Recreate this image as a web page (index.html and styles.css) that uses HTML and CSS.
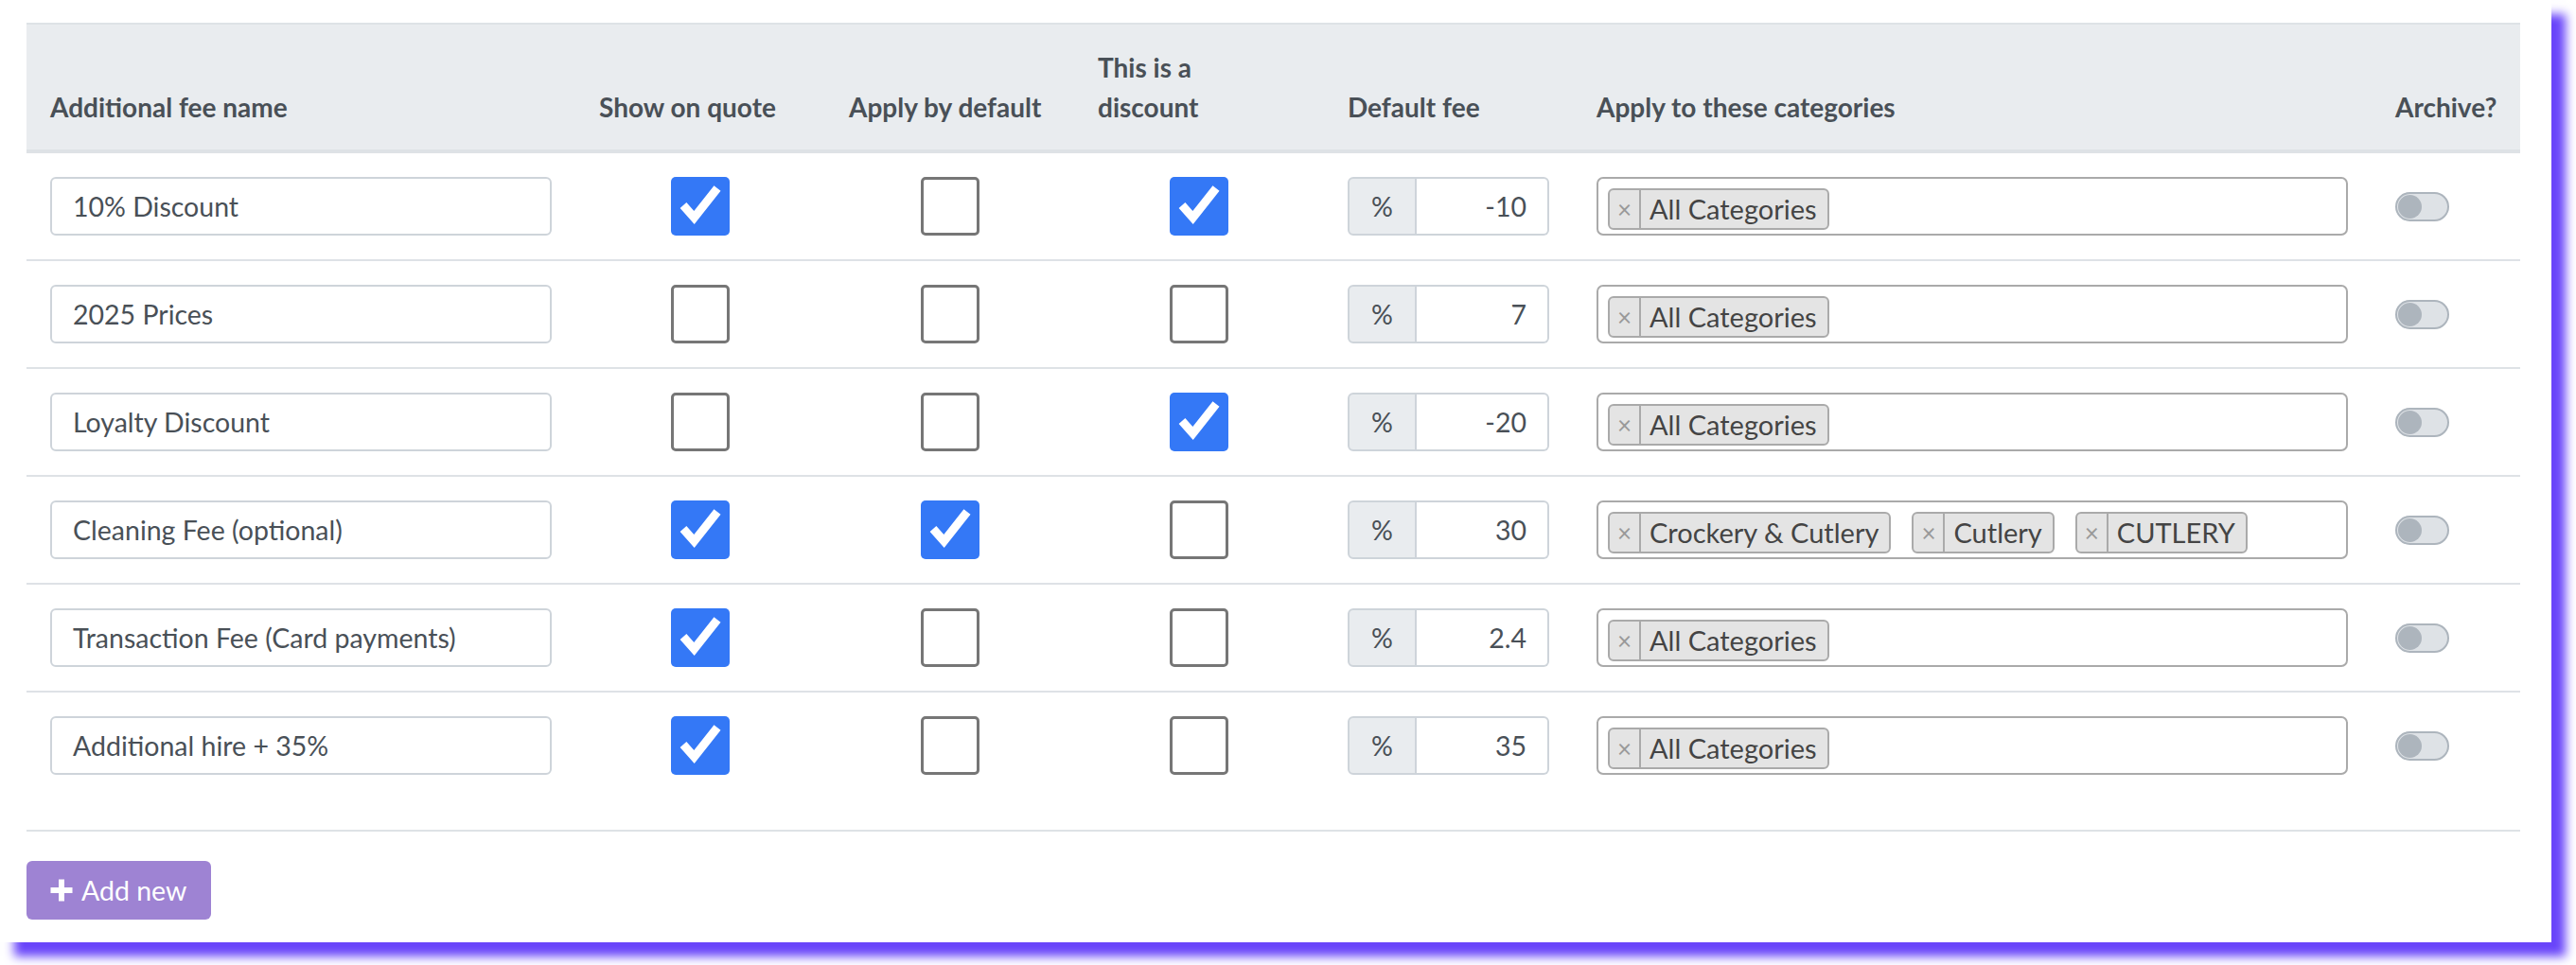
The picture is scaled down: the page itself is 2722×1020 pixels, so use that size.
FILE: index.html
```html
<!DOCTYPE html>
<html lang="en">
<head>
<meta charset="utf-8">
<title>Additional fees</title>
<link rel="stylesheet" href="styles.css">
</head>
<body>
<div class="card">
  <table class="fees">
    <colgroup>
      <col class="c-name"><col class="c-chk"><col class="c-chk2"><col class="c-chk"><col class="c-fee"><col class="c-cat"><col class="c-arch">
    </colgroup>
    <thead>
      <tr>
        <th>Additional fee name</th>
        <th>Show on quote</th>
        <th>Apply by default</th>
        <th>This is a<br>discount</th>
        <th>Default fee</th>
        <th>Apply to these categories</th>
        <th>Archive?</th>
      </tr>
    </thead>
    <tbody>
      <tr>
        <td><div class="text-input">10% Discount</div></td>
        <td class="center"><span class="chk on"><svg viewBox="0 0 62 62"><polyline points="13,30 24.5,43 49,12"/></svg></span></td>
        <td class="center"><span class="chk"></span></td>
        <td class="center"><span class="chk on"><svg viewBox="0 0 62 62"><polyline points="13,30 24.5,43 49,12"/></svg></span></td>
        <td><div class="fee"><span class="addon">%</span><span class="val">-10</span></div></td>
        <td><div class="cats"><span class="tag"><span class="x">×</span><span class="t">All Categories</span></span></div></td>
        <td><span class="switch"><span class="knob"></span></span></td>
      </tr>
      <tr>
        <td><div class="text-input">2025 Prices</div></td>
        <td class="center"><span class="chk"></span></td>
        <td class="center"><span class="chk"></span></td>
        <td class="center"><span class="chk"></span></td>
        <td><div class="fee"><span class="addon">%</span><span class="val">7</span></div></td>
        <td><div class="cats"><span class="tag"><span class="x">×</span><span class="t">All Categories</span></span></div></td>
        <td><span class="switch"><span class="knob"></span></span></td>
      </tr>
      <tr>
        <td><div class="text-input">Loyalty Discount</div></td>
        <td class="center"><span class="chk"></span></td>
        <td class="center"><span class="chk"></span></td>
        <td class="center"><span class="chk on"><svg viewBox="0 0 62 62"><polyline points="13,30 24.5,43 49,12"/></svg></span></td>
        <td><div class="fee"><span class="addon">%</span><span class="val">-20</span></div></td>
        <td><div class="cats"><span class="tag"><span class="x">×</span><span class="t">All Categories</span></span></div></td>
        <td><span class="switch"><span class="knob"></span></span></td>
      </tr>
      <tr>
        <td><div class="text-input">Cleaning Fee (optional)</div></td>
        <td class="center"><span class="chk on"><svg viewBox="0 0 62 62"><polyline points="13,30 24.5,43 49,12"/></svg></span></td>
        <td class="center"><span class="chk on"><svg viewBox="0 0 62 62"><polyline points="13,30 24.5,43 49,12"/></svg></span></td>
        <td class="center"><span class="chk"></span></td>
        <td><div class="fee"><span class="addon">%</span><span class="val">30</span></div></td>
        <td><div class="cats"><span class="tag"><span class="x">×</span><span class="t">Crockery &amp; Cutlery</span></span><span class="tag"><span class="x">×</span><span class="t">Cutlery</span></span><span class="tag"><span class="x">×</span><span class="t">CUTLERY</span></span></div></td>
        <td><span class="switch"><span class="knob"></span></span></td>
      </tr>
      <tr>
        <td><div class="text-input">Transaction Fee (Card payments)</div></td>
        <td class="center"><span class="chk on"><svg viewBox="0 0 62 62"><polyline points="13,30 24.5,43 49,12"/></svg></span></td>
        <td class="center"><span class="chk"></span></td>
        <td class="center"><span class="chk"></span></td>
        <td><div class="fee"><span class="addon">%</span><span class="val">2.4</span></div></td>
        <td><div class="cats"><span class="tag"><span class="x">×</span><span class="t">All Categories</span></span></div></td>
        <td><span class="switch"><span class="knob"></span></span></td>
      </tr>
      <tr class="last">
        <td><div class="text-input">Additional hire + 35%</div></td>
        <td class="center"><span class="chk on"><svg viewBox="0 0 62 62"><polyline points="13,30 24.5,43 49,12"/></svg></span></td>
        <td class="center"><span class="chk"></span></td>
        <td class="center"><span class="chk"></span></td>
        <td><div class="fee"><span class="addon">%</span><span class="val">35</span></div></td>
        <td><div class="cats"><span class="tag"><span class="x">×</span><span class="t">All Categories</span></span></div></td>
        <td><span class="switch"><span class="knob"></span></span></td>
      </tr>
    </tbody>
  </table>
  <button class="add-btn" type="button"><svg class="plus" viewBox="0 0 26 26"><path d="M13 1.5V24.5M1.5 13H24.5"/></svg><span>Add new</span></button>
</div>
</body>
</html>
```

FILE: styles.css
```css
html, body {
  margin: 0;
  padding: 0;
  background: #ffffff;
}

body {
  min-height: 1020px;
  font-family: Lato, "Open Sans", "Noto Sans", sans-serif;
  font-size: 28.5px;
  color: #495057;
}

.card {
  width: 2696px;
  box-sizing: border-box;
  padding: 24px 33px 24px 28px;
  background: #ffffff;
  box-shadow: 15px 15px 10px #6945fa;
}

.fees {
  width: 2635px;
  table-layout: fixed;
  border-collapse: separate;
  border-spacing: 0;
}

.c-name { width: 580px; }
.c-chk { width: 264px; }
.c-chk2 { width: 263px; }
.c-fee { width: 263px; }
.c-cat { width: 844px; }
.c-arch { width: 157px; }

.fees th {
  background: #e9ecef;
  border-top: 2px solid #dee2e6;
  border-bottom: 4px solid #dee2e6;
  padding: 24px 25px 24px 25px;
  text-align: left;
  vertical-align: bottom;
  font-weight: 700;
  font-size: 28px;
  line-height: 42px;
  white-space: nowrap;
  color: #495057;
}

.fees td {
  border-top: 2px solid #dee2e6;
  padding: 25px 25px;
  vertical-align: middle;
  height: 62px;
}

.fees tbody tr:first-child td {
  border-top: none;
}

.fees tr.last td {
  padding-bottom: 58px;
  border-bottom: 2px solid #dee2e6;
}

.center {
  text-align: center;
}

.text-input {
  box-sizing: border-box;
  height: 62px;
  border: 2px solid #ced4da;
  border-radius: 6px;
  padding: 0 22px;
  display: flex;
  align-items: center;
  white-space: nowrap;
  overflow: hidden;
  color: #495057;
}

.chk {
  display: inline-block;
  box-sizing: border-box;
  width: 62px;
  height: 62px;
  border: 3px solid #767676;
  border-radius: 5px;
  background: #ffffff;
  vertical-align: middle;
}

.chk.on {
  border: none;
  background: #3478f6;
}

.chk svg {
  display: block;
  width: 62px;
  height: 62px;
}

.chk polyline {
  fill: none;
  stroke: #ffffff;
  stroke-width: 9;
  stroke-linecap: butt;
  stroke-linejoin: miter;
}

.fee {
  display: flex;
  height: 62px;
  box-sizing: border-box;
}

.addon {
  width: 73px;
  box-sizing: border-box;
  background: #e9ecef;
  border: 2px solid #ced4da;
  border-radius: 6px 0 0 6px;
  display: flex;
  align-items: center;
  justify-content: center;
}

.val {
  flex: 1;
  box-sizing: border-box;
  border: 2px solid #ced4da;
  border-left: none;
  border-radius: 0 6px 6px 0;
  display: flex;
  align-items: center;
  justify-content: flex-end;
  padding-right: 22px;
}

.cats {
  box-sizing: border-box;
  height: 62px;
  border: 2px solid #aaaaaa;
  border-radius: 7px;
  padding: 10px 10px 0 10px;
  display: flex;
  align-items: flex-start;
  gap: 22px;
}

.tag {
  display: flex;
  box-sizing: border-box;
  height: 44px;
  border: 2px solid #aaaaaa;
  border-radius: 6px;
  background: #e4e4e4;
  color: #444444;
  overflow: hidden;
  font-size: 29px;
}

.tag .x {
  width: 33px;
  box-sizing: border-box;
  border-right: 2px solid #aaaaaa;
  color: #999999;
  font-size: 26px;
  display: flex;
  align-items: center;
  justify-content: center;
}

.tag .t {
  padding: 0 11px 0 9px;
  display: flex;
  align-items: center;
  white-space: nowrap;
  line-height: 40px;
}

.switch {
  display: block;
  box-sizing: border-box;
  width: 57px;
  height: 31px;
  border: 2px solid #adb5bd;
  border-radius: 16px;
  background: #dee2e6;
  padding: 1px;
}

.knob {
  display: block;
  width: 25px;
  height: 25px;
  border-radius: 50%;
  background: #adb5bd;
}

.add-btn {
  margin-top: 31px;
  display: flex;
  align-items: center;
  box-sizing: border-box;
  width: 195px;
  height: 62px;
  padding: 0 0 0 24px;
  border: none;
  border-radius: 6px;
  background: #9e83d3;
  color: #ffffff;
  font-family: Lato, "Open Sans", "Noto Sans", sans-serif;
  font-size: 28.5px;
}

.plus {
  width: 26px;
  height: 26px;
  margin-right: 8px;
}

.plus path {
  stroke: #ffffff;
  stroke-width: 6;
  fill: none;
}
```
